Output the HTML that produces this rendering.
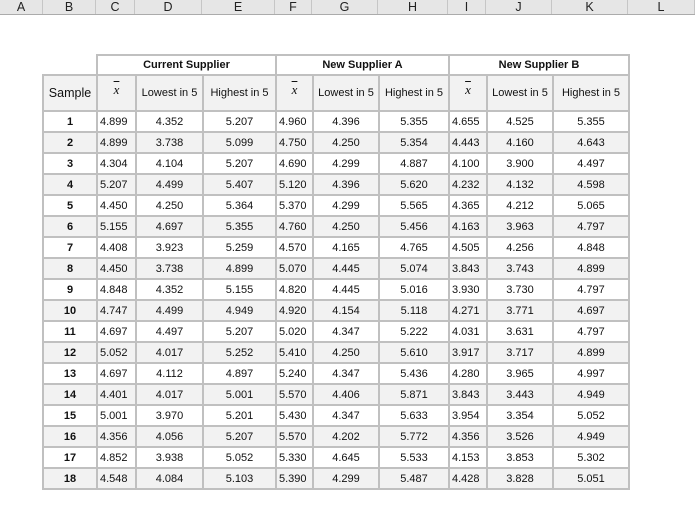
<!DOCTYPE html>
<html><head><style>
body{margin:0;width:695px;height:527px;background:#fff;font-family:"Liberation Sans",sans-serif;position:relative;overflow:hidden}
.hdr{position:absolute;top:0;left:0;width:695px;height:14px;background:#e6e6e6;border-bottom:1px solid #ababab}
.hdr div{position:absolute;top:0;height:14px;line-height:14px;text-align:center;font-size:12.5px;color:#222;border-right:1px solid #c6c6c6;box-sizing:border-box}
table{position:absolute;left:42px;top:54px;border-collapse:collapse;table-layout:fixed;font-size:11px;color:#111}
td{border:2px solid #c0c0c0;padding:0;text-align:center;height:19px;white-space:nowrap;overflow:hidden}
tr.g td{background:#f2f2f2}
td.s{font-weight:bold}
td.x{text-align:left;padding-left:2px}
tr.grp td{height:18px;font-weight:bold}
tr.h td{height:34px;background:#f2f2f2}
td.nb{border:none;background:#fff!important}
.xb{font-family:"Liberation Serif",serif;font-style:italic;font-size:13px;text-decoration:overline;vertical-align:8px}
</style></head><body>
<div class="hdr">
<div style="left:0;width:43px">A</div><div style="left:43px;width:53px">B</div><div style="left:96px;width:39px">C</div><div style="left:135px;width:67px">D</div><div style="left:202px;width:73px">E</div><div style="left:275px;width:37px">F</div><div style="left:312px;width:66px">G</div><div style="left:378px;width:70px">H</div><div style="left:448px;width:38px">I</div><div style="left:486px;width:66px">J</div><div style="left:552px;width:76px">K</div><div style="left:628px;width:67px">L</div>
</div>
<table>
<colgroup><col style="width:54px"><col style="width:39px"><col style="width:67px"><col style="width:73px"><col style="width:37px"><col style="width:66px"><col style="width:70px"><col style="width:38px"><col style="width:66px"><col style="width:76px"></colgroup>
<tr class="grp"><td class="nb"></td><td colspan="3">Current Supplier</td><td colspan="3">New Supplier A</td><td colspan="3">New Supplier B</td></tr>
<tr class="h"><td style="font-size:12.5px">Sample</td><td><span class="xb">x</span></td><td>Lowest in 5</td><td>Highest in 5</td><td><span class="xb">x</span></td><td>Lowest in 5</td><td>Highest in 5</td><td><span class="xb">x</span></td><td>Lowest in 5</td><td>Highest in 5</td></tr>
<tr><td class="s">1</td><td class="x">4.899</td><td>4.352</td><td>5.207</td><td class="x">4.960</td><td>4.396</td><td>5.355</td><td class="x">4.655</td><td>4.525</td><td>5.355</td></tr>
<tr class="g"><td class="s">2</td><td class="x">4.899</td><td>3.738</td><td>5.099</td><td class="x">4.750</td><td>4.250</td><td>5.354</td><td class="x">4.443</td><td>4.160</td><td>4.643</td></tr>
<tr><td class="s">3</td><td class="x">4.304</td><td>4.104</td><td>5.207</td><td class="x">4.690</td><td>4.299</td><td>4.887</td><td class="x">4.100</td><td>3.900</td><td>4.497</td></tr>
<tr class="g"><td class="s">4</td><td class="x">5.207</td><td>4.499</td><td>5.407</td><td class="x">5.120</td><td>4.396</td><td>5.620</td><td class="x">4.232</td><td>4.132</td><td>4.598</td></tr>
<tr><td class="s">5</td><td class="x">4.450</td><td>4.250</td><td>5.364</td><td class="x">5.370</td><td>4.299</td><td>5.565</td><td class="x">4.365</td><td>4.212</td><td>5.065</td></tr>
<tr class="g"><td class="s">6</td><td class="x">5.155</td><td>4.697</td><td>5.355</td><td class="x">4.760</td><td>4.250</td><td>5.456</td><td class="x">4.163</td><td>3.963</td><td>4.797</td></tr>
<tr><td class="s">7</td><td class="x">4.408</td><td>3.923</td><td>5.259</td><td class="x">4.570</td><td>4.165</td><td>4.765</td><td class="x">4.505</td><td>4.256</td><td>4.848</td></tr>
<tr class="g"><td class="s">8</td><td class="x">4.450</td><td>3.738</td><td>4.899</td><td class="x">5.070</td><td>4.445</td><td>5.074</td><td class="x">3.843</td><td>3.743</td><td>4.899</td></tr>
<tr><td class="s">9</td><td class="x">4.848</td><td>4.352</td><td>5.155</td><td class="x">4.820</td><td>4.445</td><td>5.016</td><td class="x">3.930</td><td>3.730</td><td>4.797</td></tr>
<tr class="g"><td class="s">10</td><td class="x">4.747</td><td>4.499</td><td>4.949</td><td class="x">4.920</td><td>4.154</td><td>5.118</td><td class="x">4.271</td><td>3.771</td><td>4.697</td></tr>
<tr><td class="s">11</td><td class="x">4.697</td><td>4.497</td><td>5.207</td><td class="x">5.020</td><td>4.347</td><td>5.222</td><td class="x">4.031</td><td>3.631</td><td>4.797</td></tr>
<tr class="g"><td class="s">12</td><td class="x">5.052</td><td>4.017</td><td>5.252</td><td class="x">5.410</td><td>4.250</td><td>5.610</td><td class="x">3.917</td><td>3.717</td><td>4.899</td></tr>
<tr><td class="s">13</td><td class="x">4.697</td><td>4.112</td><td>4.897</td><td class="x">5.240</td><td>4.347</td><td>5.436</td><td class="x">4.280</td><td>3.965</td><td>4.997</td></tr>
<tr class="g"><td class="s">14</td><td class="x">4.401</td><td>4.017</td><td>5.001</td><td class="x">5.570</td><td>4.406</td><td>5.871</td><td class="x">3.843</td><td>3.443</td><td>4.949</td></tr>
<tr><td class="s">15</td><td class="x">5.001</td><td>3.970</td><td>5.201</td><td class="x">5.430</td><td>4.347</td><td>5.633</td><td class="x">3.954</td><td>3.354</td><td>5.052</td></tr>
<tr class="g"><td class="s">16</td><td class="x">4.356</td><td>4.056</td><td>5.207</td><td class="x">5.570</td><td>4.202</td><td>5.772</td><td class="x">4.356</td><td>3.526</td><td>4.949</td></tr>
<tr><td class="s">17</td><td class="x">4.852</td><td>3.938</td><td>5.052</td><td class="x">5.330</td><td>4.645</td><td>5.533</td><td class="x">4.153</td><td>3.853</td><td>5.302</td></tr>
<tr class="g"><td class="s">18</td><td class="x">4.548</td><td>4.084</td><td>5.103</td><td class="x">5.390</td><td>4.299</td><td>5.487</td><td class="x">4.428</td><td>3.828</td><td>5.051</td></tr>
</table>
</body></html>
